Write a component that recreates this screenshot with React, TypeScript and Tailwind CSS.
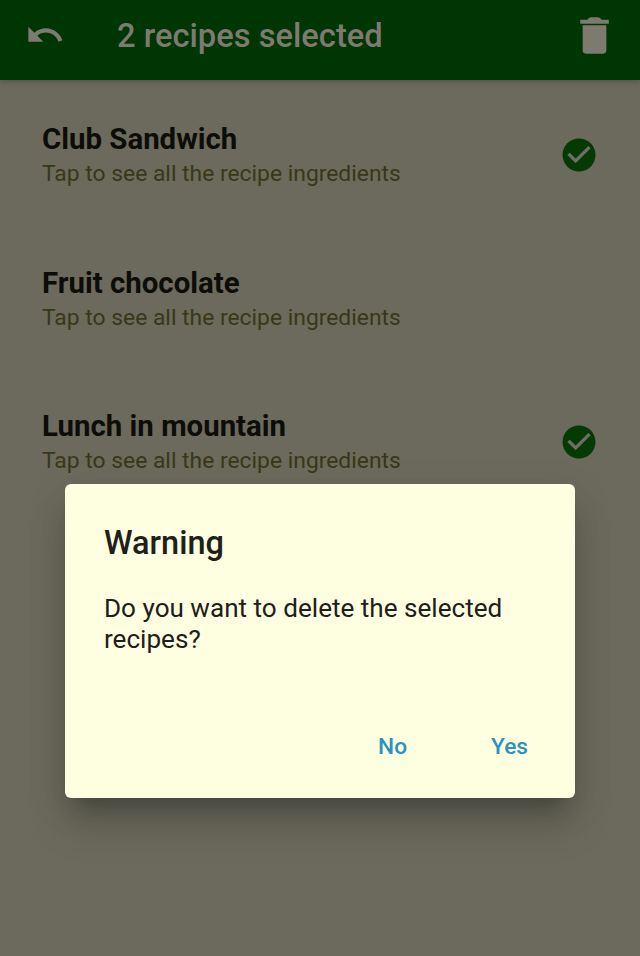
const recipes = [
  { name: "Club Sandwich", selected: true },
  { name: "Fruit chocolate", selected: false },
  { name: "Lunch in mountain", selected: true },
];

function UndoIcon() {
  return (
    <svg viewBox="0 0 24 24" className="h-10 w-10 shrink-0" fill="currentColor">
      <path d="M12.5 8c-2.65 0-5.05.99-6.9 2.6L2 7v9h9l-3.62-3.62c1.39-1.16 3.16-1.88 5.12-1.88 3.54 0 6.55 2.31 7.6 5.5l2.37-.78C21.08 11.03 17.15 8 12.5 8z" />
    </svg>
  );
}

function TrashIcon() {
  return (
    <svg viewBox="0 0 24 24" className="h-[49px] w-[49px] shrink-0" fill="currentColor">
      <path d="M6.2 19.4c0 .9.6 1.5 1.5 1.5h8.6c.9 0 1.5-.6 1.5-1.5V7H6.2v12.4zM19 4.3h-3.6c-.4-.8-1-1.3-1.9-1.3h-3c-.9 0-1.5.5-1.9 1.3H5v2h14z" />
    </svg>
  );
}

function CheckIcon() {
  return (
    <svg viewBox="0 0 24 24" className="h-10 w-10 shrink-0">
      <circle cx="12" cy="12" r="9.9" fill="#053a04" />
      <path d="M10 17l-5-5 1.41-1.41L10 14.17l7.59-7.59L19 8l-9 9z" fill="#6f6e60" />
    </svg>
  );
}

export default function App() {
  return (
    <div className="relative h-[956px] w-[640px] overflow-hidden bg-[#6b6a5c] font-['Roboto',sans-serif]">
      <header className="relative flex h-20 items-start bg-[#003504] pl-[25px] pr-[21px] text-[#7d7b70] shadow-[0_1px_6px_rgba(0,0,0,0.28)]">
        <div className="pt-[15px]"><UndoIcon /></div>
        <h1 className="ml-[52px] mt-[16px] flex-1 whitespace-nowrap text-[32.7px] font-medium leading-[40px]">
          2 recipes selected
        </h1>
        <div className="pt-[11px]"><TrashIcon /></div>
      </header>
      <main className="pt-[3.5px]">
        {recipes.map((recipe) => (
          <div key={recipe.name} className="flex h-[143.5px] items-center justify-between pl-[42px] pr-[41px]">
            <div className="pt-[3px]">
              <h2 className="text-[29.4px] font-bold leading-[34px] text-[#0d0d08]">{recipe.name}</h2>
              <p className="text-[22.85px] leading-[35px] text-[#383818]">Tap to see all the recipe ingredients</p>
            </div>
            {recipe.selected && <CheckIcon />}
          </div>
        ))}
      </main>
      <div
        role="dialog"
        className="absolute left-[65px] top-[484px] flex h-[314px] w-[510px] flex-col rounded-[6px] bg-[#fefee0] px-[39px] text-[#20201a] shadow-[0_18px_20px_-11px_rgba(0,0,0,0.24),0_30px_40px_0px_rgba(0,0,0,0.12),0_10px_40px_4px_rgba(0,0,0,0.07)]"
      >
        <h2 className="mt-[39px] text-[32.5px] font-medium leading-[40px]">Warning</h2>
        <p className="mt-[30px] text-[26.1px] leading-[31px]">Do you want to delete the selected recipes?</p>
        <div className="mt-[78px] flex justify-end gap-[84px] pr-[8px] text-[22.7px] font-medium leading-[28px] text-[#2b93c2]">
          <button>No</button>
          <button>Yes</button>
        </div>
      </div>
    </div>
  );
}
